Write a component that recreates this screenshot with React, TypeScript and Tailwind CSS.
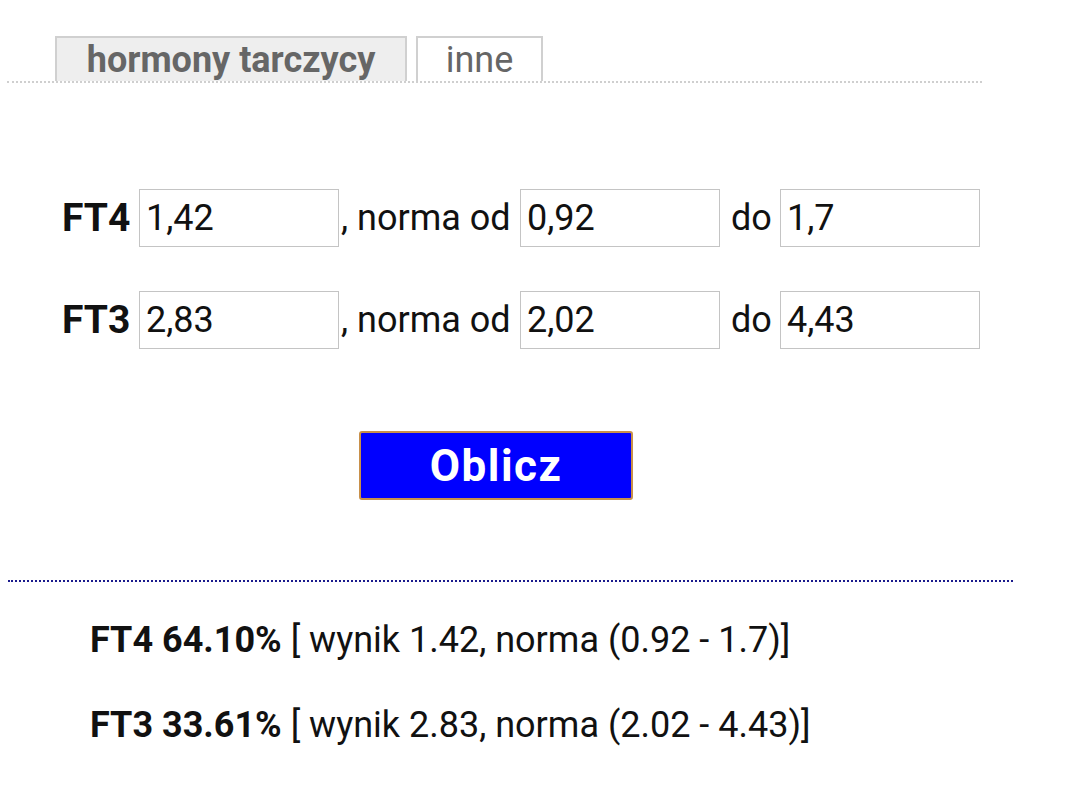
import React from "react";

const inputCls =
  "w-[200px] h-[58px] border border-[#c4c4c4] bg-white px-[6px] text-[36px] text-[#111] outline-none";

function Row({ label, v, a, b }: { label: string; v: string; a: string; b: string }) {
  return (
    <div className="flex items-center h-[58px]">
      <span className="ml-[62px] w-[77px] font-bold text-[39px] text-[#111]">{label}</span>
      <input className={inputCls} defaultValue={v} />
      <span className="w-[181px] pl-[2px] text-[36px] text-[#111] whitespace-nowrap">, norma od</span>
      <input className={inputCls} defaultValue={a} />
      <span className="w-[60px] pl-[11px] text-[36px] text-[#111]">do</span>
      <input className={inputCls} defaultValue={b} />
    </div>
  );
}

export default function App() {
  return (
    <div className="w-[1073px] h-[804px] bg-white" style={{ fontFamily: "Roboto, sans-serif" }}>
      <div className="pt-[36px] flex">
        <div className="ml-[7px] w-[975px] border-b-2 border-dotted border-[#cfcfcf] flex items-end">
          <div className="ml-[48px] w-[352px] h-[45px] bg-[#eeeeee] border-2 border-b-0 border-[#d0d0d0] flex items-center justify-center text-[36px] font-bold text-[#666]">
            hormony tarczycy
          </div>
          <div className="ml-[9px] w-[127px] h-[45px] bg-white border-2 border-b-0 border-[#d0d0d0] flex items-center justify-center text-[36px] text-[#666]">
            inne
          </div>
        </div>
      </div>
      <div className="mt-[106px] flex flex-col gap-[44px]">
        <Row label="FT4" v="1,42" a="0,92" b="1,7" />
        <Row label="FT3" v="2,83" a="2,02" b="4,43" />
      </div>
      <div className="mt-[82px] ml-[359px]">
        <button className="w-[274px] h-[69px] bg-[#0000ff] border-2 border-[#c8904a] rounded-[3px] text-white font-bold text-[44px] tracking-[1.5px]">
          Oblicz
        </button>
      </div>
      <div className="mt-[80px] ml-[8px] w-[1005px] border-t-2 border-dotted border-[#1a1a8c]" />
      <div className="mt-[36px] ml-[90px] flex flex-col gap-[41px] text-[36px] text-[#111] leading-[44px]">
        <div className="whitespace-nowrap">
          <b>FT4 64.10%</b> [ wynik 1.42, norma (0.92 - 1.7)]
        </div>
        <div className="whitespace-nowrap">
          <b>FT3 33.61%</b> [ wynik 2.83, norma (2.02 - 4.43)]
        </div>
      </div>
    </div>
  );
}
